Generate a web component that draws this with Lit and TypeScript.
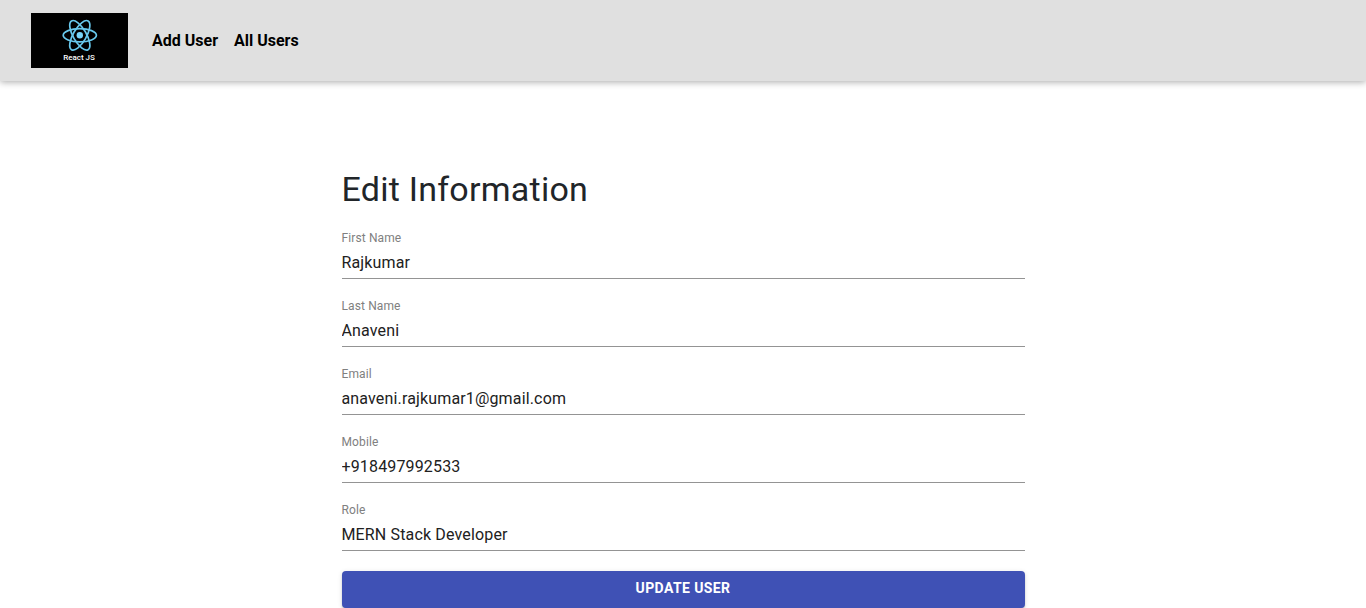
import { LitElement, html, css } from "lit";
import { customElement, state } from "lit/decorators.js";

@customElement("react-logo")
class ReactLogo extends LitElement {
  static styles = css`
    :host { display: block; line-height: 0; }
  `;
  render() {
    return html`
      <svg width="97" height="55" viewBox="0 0 97 55" role="img" aria-label="React JS">
        <rect width="97" height="55" fill="#000" />
        <g fill="none" stroke="#68c8ec" stroke-width="1.7">
          <ellipse cx="48.8" cy="22.3" rx="16.6" ry="6.6" />
          <ellipse cx="48.8" cy="22.3" rx="16.6" ry="6.6" transform="rotate(60 48.8 22.3)" />
          <ellipse cx="48.8" cy="22.3" rx="16.6" ry="6.6" transform="rotate(120 48.8 22.3)" />
        </g>
        <circle cx="48.8" cy="22.3" r="3.2" fill="#78d4f8" />
        <text x="48" y="47" text-anchor="middle" fill="#fff" font-family="Roboto, sans-serif" font-size="8" font-weight="500">React JS</text>
      </svg>
    `;
  }
}

@customElement("app-root")
export class AppRoot extends LitElement {
  static styles = css`
    * { box-sizing: border-box; }
    :host {
      display: block;
      height: 100vh;
      overflow: hidden;
      background: #fff;
      font-family: Roboto, sans-serif;
      color: #212121;
    }
    .bar {
      display: flex;
      align-items: center;
      padding: 13px 31px;
      background: #e0e0e0;
      box-shadow: 0 1px 7px rgba(0, 0, 0, 0.35);
    }
    .links { display: flex; gap: 16px; margin-left: 24px; }
    .links a { color: #000; font-size: 16px; line-height: 24px; font-weight: 700; text-decoration: none; }
    form { width: 50%; margin: 88px auto 0; display: flex; flex-direction: column; gap: 20px; }
    h1 { margin: 0 0 2px; font-size: 34px; line-height: 40px; font-weight: 400; letter-spacing: 0.00735em; color: #212529; }
    .field { display: flex; flex-direction: column; border-bottom: 1px solid #949494; }
    label { font-size: 12px; line-height: 14px; color: #808080; letter-spacing: 0.00938em; }
    input {
      width: 100%; height: 33px; padding: 2px 0 0; border: 0; outline: 0; background: transparent;
      font: 400 16px/20px Roboto, sans-serif; letter-spacing: 0.00938em; color: #212121;
    }
    button {
      height: 37px; padding: 0 16px 3px; border: 0; border-radius: 4px; background: #3f51b5; color: #fff;
      font: 700 14px/24px Roboto, sans-serif; text-transform: uppercase; letter-spacing: 0.02857em;
      box-shadow: 0 3px 1px -2px rgba(0, 0, 0, 0.2), 0 2px 2px 0 rgba(0, 0, 0, 0.14), 0 1px 5px 0 rgba(0, 0, 0, 0.12);
    }
  `;

  @state() private fields = [
    { id: "first", label: "First Name", type: "text", value: "Rajkumar" },
    { id: "last", label: "Last Name", type: "text", value: "Anaveni" },
    { id: "email", label: "Email", type: "email", value: "anaveni.rajkumar1@gmail.com" },
    { id: "mobile", label: "Mobile", type: "tel", value: "+918497992533" },
    { id: "role", label: "Role", type: "text", value: "MERN Stack Developer" },
  ];

  render() {
    return html`
      <header class="bar">
        <react-logo></react-logo>
        <nav class="links">
          <a href="#add">Add User</a>
          <a href="#all">All Users</a>
        </nav>
      </header>
      <form @submit=${(e: Event) => e.preventDefault()}>
        <h1>Edit Information</h1>
        ${this.fields.map((f) => html`
          <div class="field">
            <label for=${f.id}>${f.label}</label>
            <input id=${f.id} type=${f.type} .value=${f.value} />
          </div>
        `)}
        <button type="submit">Update User</button>
      </form>
    `;
  }
}
